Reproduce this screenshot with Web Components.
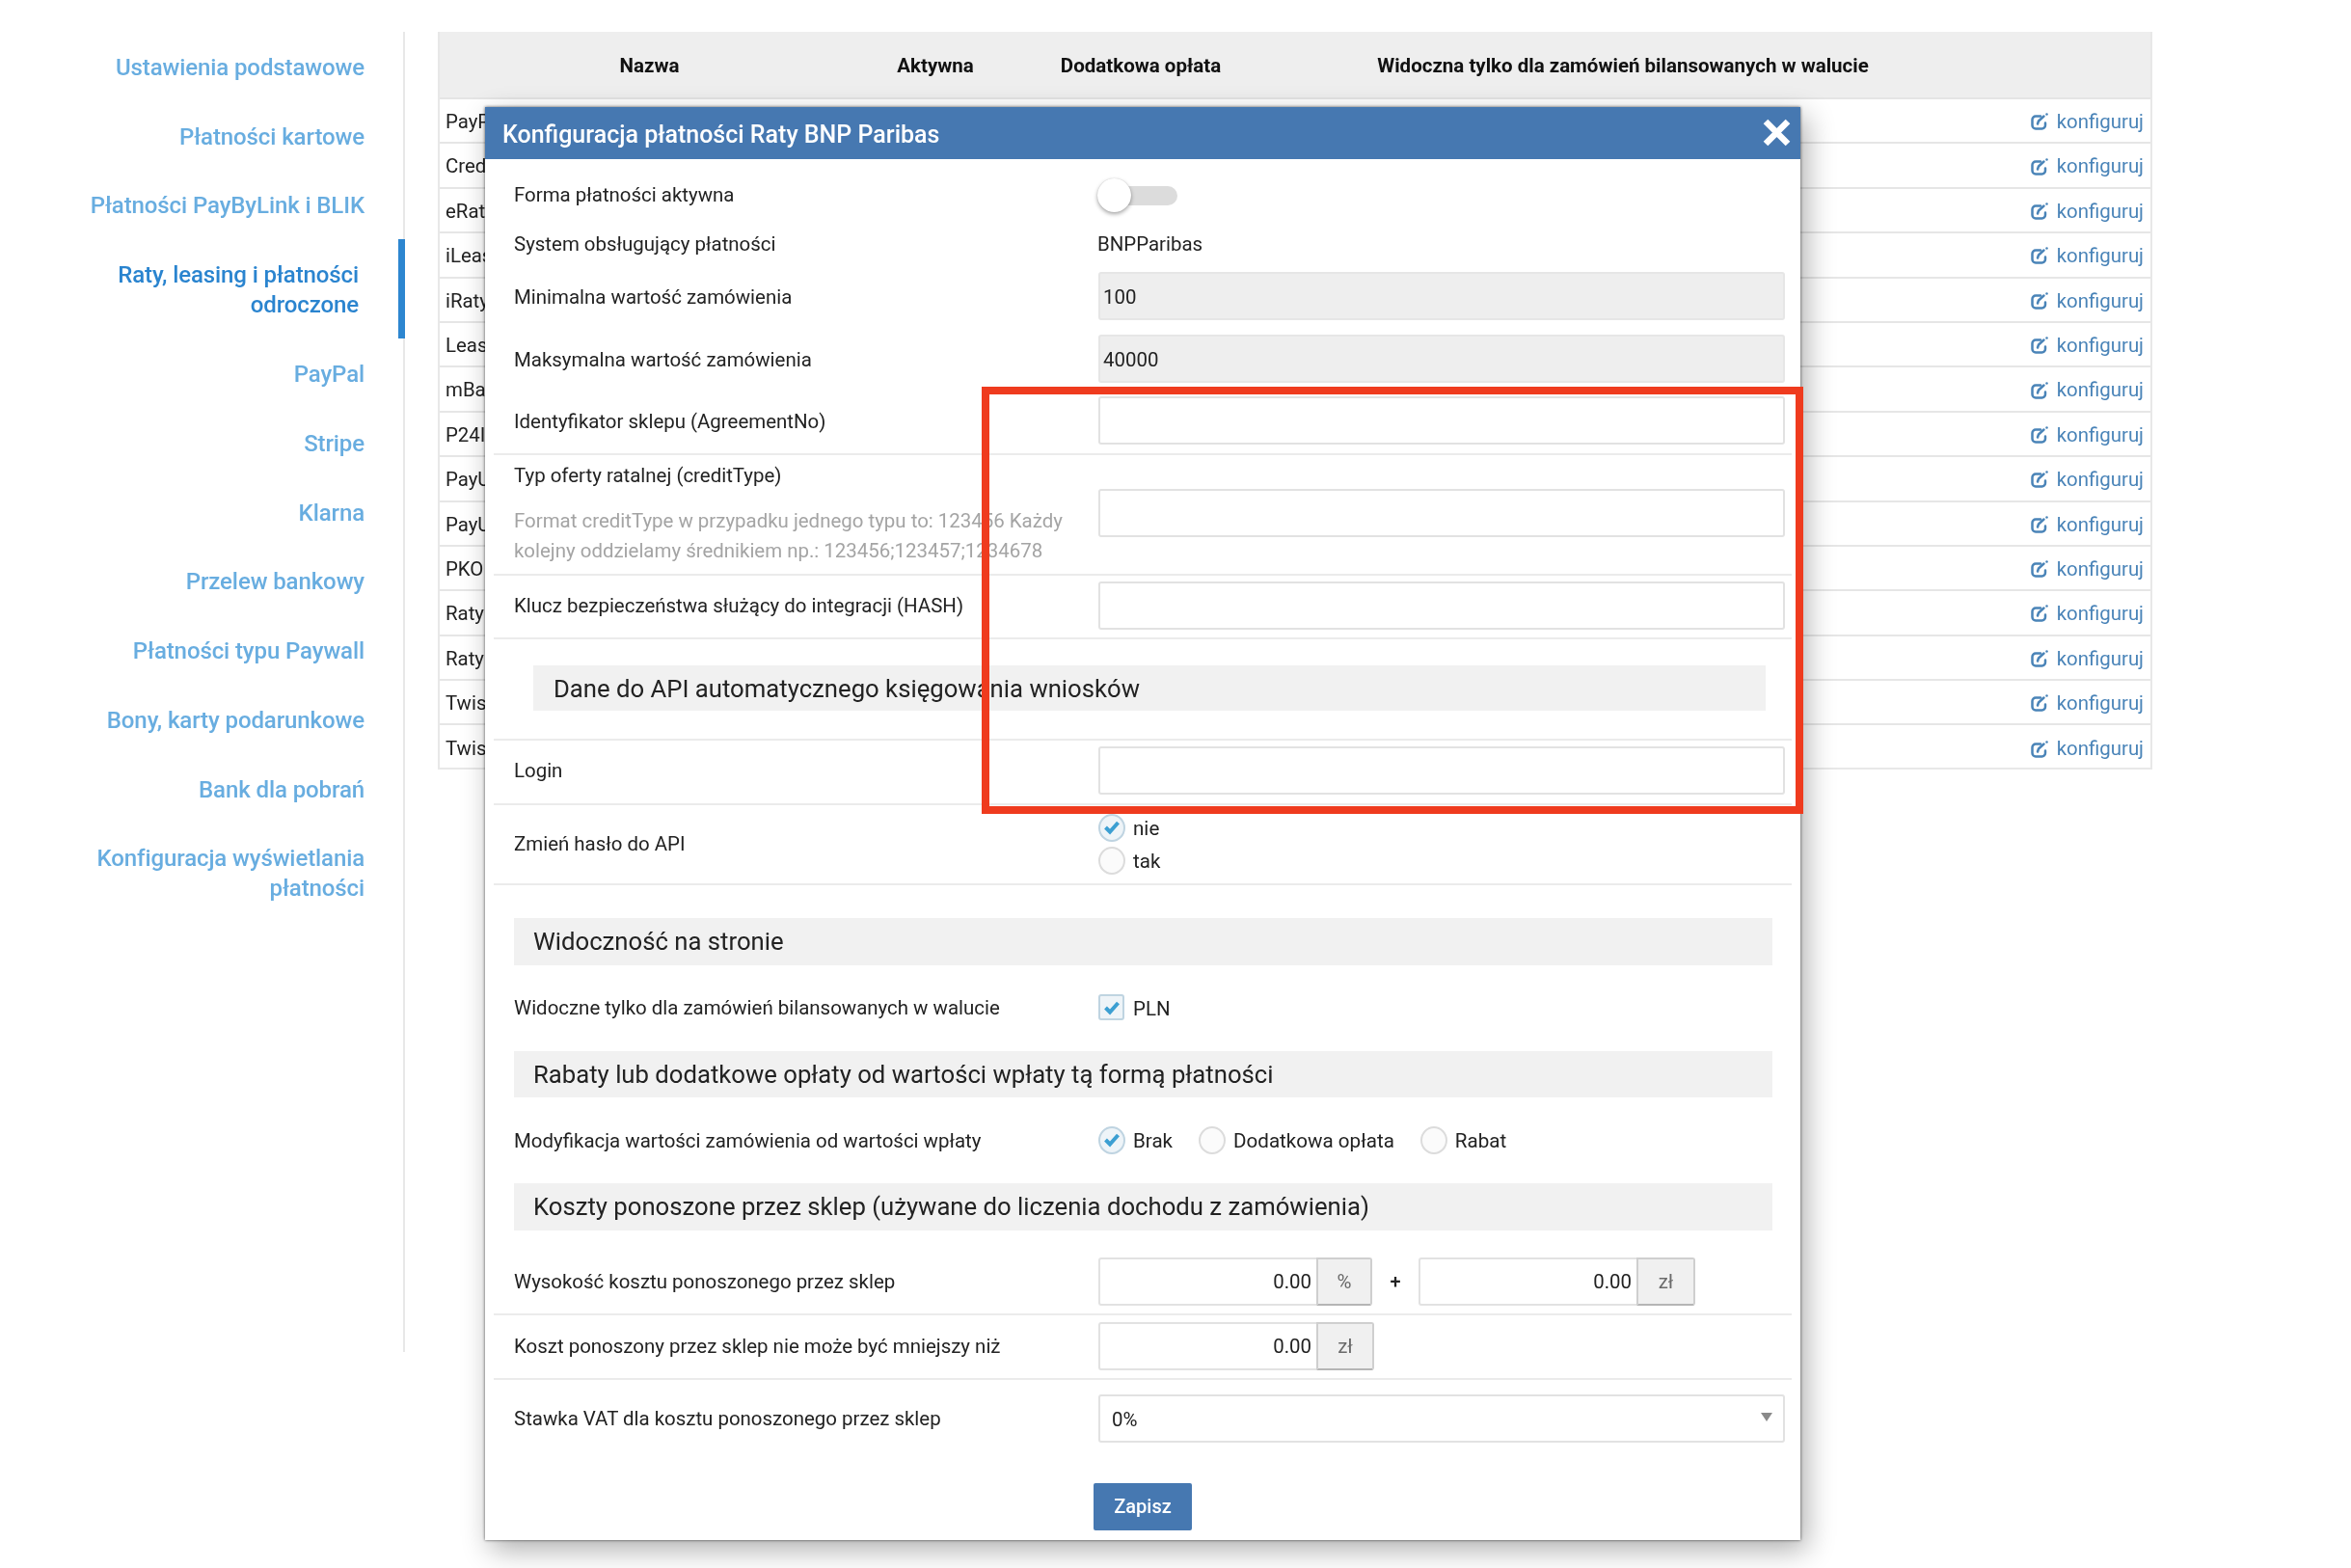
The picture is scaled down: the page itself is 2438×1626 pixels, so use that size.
<!DOCTYPE html>
<html lang="pl"><head><meta charset="utf-8"><title>Płatności</title>
<style>html,body{margin:0;padding:0;background:#fff}body{font-family:Roboto,"Liberation Sans",sans-serif;font-size:20px;color:#222}</style>
</head><body>
<pay-page>
  <side-nav slot="side">
    <side-item>Ustawienia podstawowe</side-item>
    <side-item>Płatności kartowe</side-item>
    <side-item>Płatności PayByLink i BLIK</side-item>
    <side-item active>Raty, leasing i płatności<br>odroczone</side-item>
    <side-item>PayPal</side-item>
    <side-item>Stripe</side-item>
    <side-item>Klarna</side-item>
    <side-item>Przelew bankowy</side-item>
    <side-item>Płatności typu Paywall</side-item>
    <side-item>Bony, karty podarunkowe</side-item>
    <side-item>Bank dla pobrań</side-item>
    <side-item>Konfiguracja wyświetlania<br>płatności</side-item>
  </side-nav>
  <pay-table slot="main">
    <pay-row>PayP</pay-row><pay-row>Cred</pay-row><pay-row>eRat</pay-row><pay-row>iLeas</pay-row><pay-row>iRaty</pay-row>
    <pay-row>Leas</pay-row><pay-row>mBa</pay-row><pay-row>P24I</pay-row><pay-row>PayU</pay-row><pay-row>PayU</pay-row>
    <pay-row>PKO</pay-row><pay-row>Raty</pay-row><pay-row>Raty</pay-row><pay-row>Twis</pay-row><pay-row>Twis</pay-row>
  </pay-table>
  <pay-modal slot="over" heading="Konfiguracja płatności Raty BNP Paribas">
    <form-row style="--ch:52px;--lp:0px"><span slot="label">Forma płatności aktywna</span><toggle-switch></toggle-switch></form-row>
    <form-row style="--ch:50px;--lp:0px"><span slot="label">System obsługujący płatności</span><plain-value>BNPParibas</plain-value></form-row>
    <form-row style="--ch:58px"><span slot="label">Minimalna wartość zamówienia</span><text-field disabled>100</text-field></form-row>
    <form-row style="--ch:72px"><span slot="label">Maksymalna wartość zamówienia</span><text-field disabled>40000</text-field></form-row>
    <form-row line style="--pt:3px;--pb:9px"><span slot="label">Identyfikator sklepu (AgreementNo)</span><text-field></text-field></form-row>
    <form-row line style="--pt:6px;--pb:7.5px;--al:start;--lp:0px"><span slot="label">Typ oferty ratalnej (creditType)<help-text>Format creditType w przypadku jednego typu to: 123456 Każdy kolejny oddzielamy średnikiem np.: 123456;123457;1234678</help-text></span><text-field style="margin-top:29px"></text-field></form-row>
    <form-row line style="--pt:6px;--pb:8px"><span slot="label">Klucz bezpieczeństwa służący do integracji (HASH)</span><text-field></text-field></form-row>
    <section-title style="margin:27px 36px 29px 50px;padding:4px 0 0 21px;height:47px">Dane do API automatycznego księgowania wniosków</section-title>
    <form-divider></form-divider>
    <form-row line style="--pt:6px;--pb:9px"><span slot="label">Login</span><text-field></text-field></form-row>
    <form-row line style="--pt:9px;--pb:9px;--ch:63px;--lp:0px"><span slot="label">Zmień hasło do API</span><opt-stack><radio-opt checked>nie</radio-opt><radio-opt>tak</radio-opt></opt-stack></form-row>
    <section-title style="margin-top:34px;height:49px">Widoczność na stronie</section-title>
    <form-row style="--pt:21px;--ch:48px;--lp:0px"><span slot="label">Widoczne tylko dla zamówień bilansowanych w walucie</span><check-opt>PLN</check-opt></form-row>
    <section-title style="margin-top:20px;height:48px">Rabaty lub dodatkowe opłaty od wartości wpłaty tą formą płatności</section-title>
    <form-row style="--ch:89px"><span slot="label">Modyfikacja wartości zamówienia od wartości wpłaty</span><opt-line><radio-opt checked>Brak</radio-opt><radio-opt>Dodatkowa opłata</radio-opt><radio-opt>Rabat</radio-opt></opt-line></form-row>
    <section-title style="height:49px">Koszty ponoszone przez sklep (używane do liczenia dochodu z zamówienia)</section-title>
    <form-row line style="--pt:28px;--pb:8px"><span slot="label">Wysokość kosztu ponoszonego przez sklep</span><opt-line style="--gap:0px"><addon-field unit="%">0.00</addon-field><plus-sign>+</plus-sign><addon-field unit="zł" style="--aw:61px">0.00</addon-field></opt-line></form-row>
    <form-row line style="--pt:7px;--pb:8px"><span slot="label">Koszt ponoszony przez sklep nie może być mniejszy niż</span><addon-field unit="zł" style="--aw:60px">0.00</addon-field></form-row>
    <form-row style="--pt:15px"><span slot="label">Stawka VAT dla kosztu ponoszonego przez sklep</span><select-box>0%</select-box></form-row>
    <save-button>Zapisz</save-button>
  </pay-modal>
  <mark-box slot="over"></mark-box>
</pay-page>
<script>
const FONT='Roboto,"Liberation Sans",sans-serif';
function def(name,css,html,setup){
  const t=document.createElement('template');
  t.innerHTML=`<style>${css}</style>${html}`;
  customElements.define(name,class extends HTMLElement{
    constructor(){super();this.attachShadow({mode:'open'}).appendChild(t.content.cloneNode(true));}
    connectedCallback(){if(setup)setup(this,this.shadowRoot);}
  });
}
def('pay-page',`:host{display:block;position:relative;width:2438px;height:1626px;overflow:hidden;background:#fff;filter:blur(.7px)}
 .w{display:flex;padding-top:33px}`,
 `<div class="w"><slot name="side"></slot><slot name="main"></slot></div><slot name="over"></slot>`);
def('side-nav',`:host{display:block;box-sizing:border-box;width:420px;height:1369px;border-right:2px solid #e8e8e8;flex:none}`,`<slot></slot>`);
def('side-item',`:host{display:block;box-sizing:border-box;padding:21.9px 40px 18.9px 0;text-align:right;color:#68ade0;font:500 24px/31px ${FONT};letter-spacing:-.1px}
 :host([active]){color:#2a84cf;margin-right:-2px;border-right:7px solid #2d86d0;padding-right:41px}`,`<slot></slot>`);
def('pay-table',`:host{display:block;box-sizing:border-box;width:1778px;margin-left:34px;height:765px;border:2px solid #e8e8e8;border-top:0;flex:none}
 .h{display:grid;grid-template-columns:435px 158px 268px 732px 1fr;height:70px;padding-top:2px;background:#eee;border-bottom:2px solid #e4e4e4;box-sizing:border-box;align-items:center;text-align:center;font:700 20.5px/1 ${FONT};color:#111}`,
 `<div class="h"><span>Nazwa</span><span>Aktywna</span><span>Dodatkowa opłata</span><span>Widoczna tylko dla zamówień bilansowanych w walucie</span><span></span></div><slot></slot>`);
def('pay-row',`:host{display:flex;box-sizing:border-box;height:46.4px;align-items:center;justify-content:space-between;padding:2px 7px 0 6px;border-bottom:2px solid #e6e6e6;font:400 20.4px/1 ${FONT};color:#222}
 :host(:last-child){border-bottom:0}
 .a{display:inline-flex;align-items:center;gap:9px;color:#4a84b8}svg{display:block}`,
 `<span><slot></slot></span><span class="a"><svg width="18" height="18" viewBox="0 0 18 18" fill="none" stroke="#4a84b8" stroke-width="2.5" stroke-linecap="round"><path d="M15 10.5V13a3.5 3.5 0 0 1-3.5 3.5H5A3.5 3.5 0 0 1 1.5 13V7A3.5 3.5 0 0 1 5 3.5h5"/><path d="M7 11.5 8 8.5 13.5 3.5"/><path d="M16.5 1.5h.01"/></svg>konfiguruj</span>`);
def('pay-modal',`:host{position:absolute;left:503px;top:111px;width:1364px;box-sizing:border-box;background:#fff;box-shadow:0 0 3px rgba(0,0,0,.65),6px 10px 28px rgba(0,0,0,.32);display:block}
 .h{height:54px;padding:2px 10px 0 18px;box-sizing:border-box;background:#4678b1;color:#fff;display:flex;align-items:center;justify-content:space-between;font:500 25px/1 ${FONT}}
 .b{padding:11px 0 10px}svg{display:block;margin-top:-3px}`,
 `<div class="h"><span id="t"></span><svg width="29" height="29" viewBox="0 0 29 29" stroke="#fff" stroke-width="6.5" stroke-linecap="butt"><path d="M3 3 26 26M26 3 3 26"/></svg></div><div class="b"><slot></slot></div>`,
 (e,s)=>{s.getElementById('t').textContent=e.getAttribute('heading');});
def('form-row',`:host{display:block;margin:0 9px;padding:var(--pt,0) 7px var(--pb,0) 21px;font:400 20.45px/31px ${FONT};color:#222}
 :host([line]){border-bottom:2px solid #ebebeb}
 .g{display:grid;grid-template-columns:606px 1fr;align-items:var(--al,center);min-height:var(--ch,50px)}
 .l{padding-top:var(--lp,2px)}`,
 `<div class="g"><div class="l"><slot name="label"></slot></div><div><slot></slot></div></div>`);
def('plain-value',`:host{display:block;margin-left:-1px}`,`<slot></slot>`);
def('help-text',`:host{display:block;width:590px;margin-top:16px;color:#a4a4a4}`,`<slot></slot>`);
def('text-field',`:host{display:flex;box-sizing:border-box;height:50px;align-items:center;padding:2px 3px 0;border:2px solid #e2e2e2;border-radius:3px;background:#fff;font:400 20.45px/1 ${FONT};color:#222}
 :host([disabled]){background:#eee;border-color:#e6e6e6}`,`<slot></slot>`);
def('section-title',`:host{display:flex;align-items:center;box-sizing:border-box;margin:0 29px 0 30px;padding:2px 0 0 20px;background:#f1f1f1;font:400 25.7px/1 ${FONT};color:#222}`,`<slot></slot>`);
def('form-divider',`:host{display:block;margin:0 9px;height:2px;background:#ebebeb}`,``);
def('toggle-switch',`:host{display:block;position:relative;width:83px;height:34px;margin-left:-1px}
 .t{position:absolute;left:16px;right:0;top:8px;height:20px;border-radius:10px;background:#dcdcdc}
 .k{position:absolute;left:0;top:0;width:35px;height:35px;border-radius:50%;background:#fff;box-shadow:0 2px 4px rgba(0,0,0,.35),0 0 1px rgba(0,0,0,.2)}`,
 `<div class="t"></div><div class="k"></div>`);
const TICK=`<svg width="18" height="16" viewBox="0 0 18 16" fill="none" stroke="#3c9fd2" stroke-width="4"><path d="M2.5 8 7 12.5 15.5 3"/></svg>`;
def('radio-opt',`:host{display:inline-flex;align-items:center;gap:8px;font:400 20.6px/1 ${FONT};color:#222}
 .t{padding-top:2px}
 .c{box-sizing:border-box;width:28px;height:29px;border-radius:50%;border:2px solid #dcdcdc;background:#fbfbfb;display:flex;align-items:center;justify-content:center}
 svg{display:none}:host([checked]) svg{display:block}:host([checked]) .c{border-color:#bfd4e1;background:#eef4f8}`,
 `<span class="c">${TICK}</span><span class="t"><slot></slot></span>`);
def('check-opt',`:host{display:inline-flex;align-items:center;gap:9px;padding-top:2px;font:400 20.45px/1 ${FONT}}
 .t{padding-top:2px}
 .c{box-sizing:border-box;width:27px;height:27px;border-radius:3px;border:2px solid #bfd4e1;background:#eef4f8;display:flex;align-items:center;justify-content:center}`,
 `<span class="c">${TICK}</span><span class="t"><slot></slot></span>`);
def('opt-stack',`:host{display:flex;flex-direction:column;align-items:flex-start;gap:5px}`,`<slot></slot>`);
def('opt-line',`:host{display:flex;align-items:center;gap:var(--gap,27px)}`,`<slot></slot>`);
def('plus-sign',`:host{display:block;width:48px;text-align:center;font:500 20px/1 ${FONT}}`,`<slot></slot>`);
def('addon-field',`:host{display:inline-flex;height:50px;font:400 20.45px/1 ${FONT}}
 .i{box-sizing:border-box;width:226px;height:50px;padding:2px 5px 0 0;border:2px solid #e2e2e2;border-right:0;border-radius:3px 0 0 3px;display:flex;align-items:center;justify-content:flex-end}
 .u{box-sizing:border-box;width:var(--aw,58px);height:50px;padding-top:2px;border:2px solid #cfcfcf;border-bottom-color:#b5b5b5;border-radius:0 3px 3px 0;background:#f0f0f0;color:#6a6a6a;display:flex;align-items:center;justify-content:center}`,
 `<span class="i"><slot></slot></span><span class="u" id="u"></span>`,(e,s)=>{s.getElementById('u').textContent=e.getAttribute('unit');});
def('select-box',`:host{display:flex;box-sizing:border-box;height:50px;align-items:center;justify-content:space-between;padding:4px 11px 0 12px;border:2px solid #e2e2e2;border-radius:3px;font:400 20.45px/1 ${FONT}}
 i{display:block;width:0;height:0;border:6px solid transparent;border-top:9px solid #8a8a8a;border-bottom:0;margin-top:-6px}`,`<span><slot></slot></span><i></i>`);
def('save-button',`:host{display:flex;align-items:center;justify-content:center;width:102px;height:49px;margin:42px 0 0 631px;background:#4678b1;border-radius:2px;color:#fff;font:500 20px/1 ${FONT}}`,`<slot></slot>`);
def('mark-box',`:host{position:absolute;left:1018px;top:401px;width:852px;height:443px;box-sizing:border-box;border:8px solid #ef3b1e;display:block;pointer-events:none}`,``);
</script>
</body></html>
